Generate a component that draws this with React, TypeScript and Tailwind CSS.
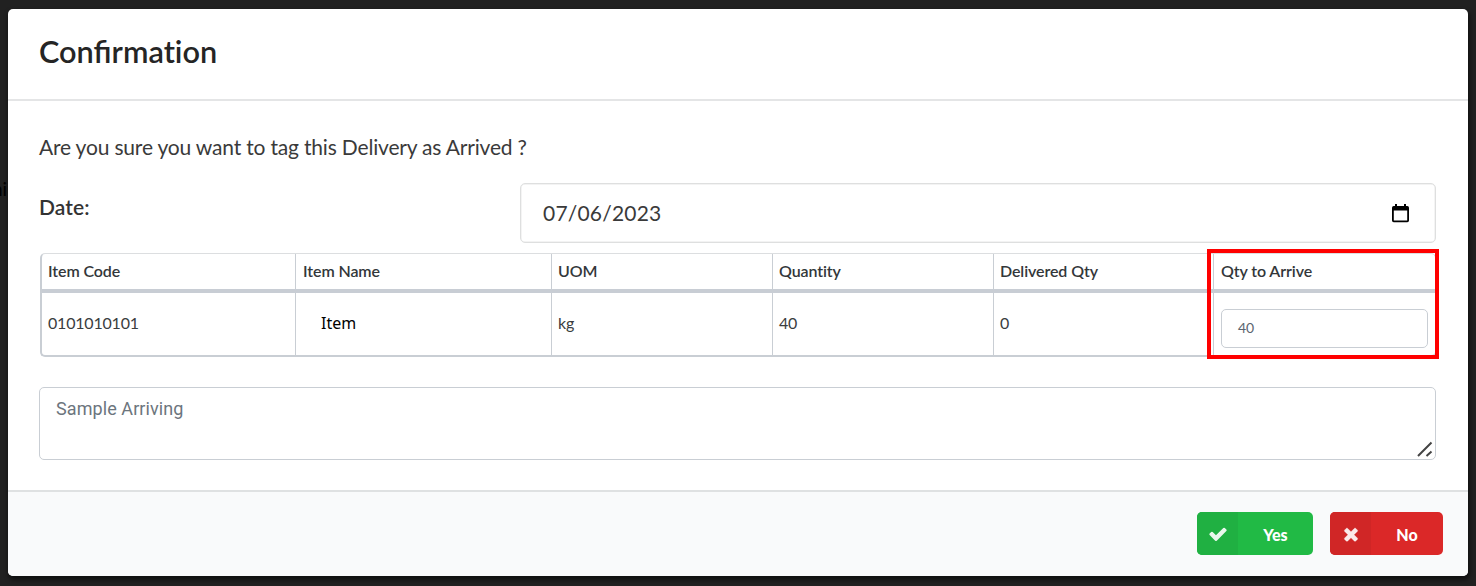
import React from "react";

const columns = [
  { title: "Item Code", value: "0101010101", width: "w-[253px] pl-[6px]" },
  { title: "Item Name", value: "Item", width: "w-[256px] pl-[7px] border-l border-[#c9ced4]" },
  { title: "UOM", value: "kg", width: "w-[221px] pl-[6px] border-l border-[#c9ced4]" },
  { title: "Quantity", value: "40", width: "w-[221px] pl-[6px] border-l border-[#c9ced4]" },
  { title: "Delivered Qty", value: "0", width: "w-[220px] pl-[6px] border-l border-[#c9ced4]" },
  { title: "Qty to Arrive", value: "40", width: "flex-1 pl-[7px] border-l border-[#c9ced4]" },
];

function CalendarIcon() {
  return (
    <svg width="17" height="19" viewBox="0 0 17 19" aria-hidden="true">
      <path
        fill="#000"
        fillRule="evenodd"
        d="M3 0h2v2h7V0h2v2h1.300A1.700 1.700 0 0 1 17 3.700v12.800a1.700 1.700 0 0 1-1.700 1.700H1.700A1.700 1.700 0 0 1 0 16.500V3.700A1.700 1.700 0 0 1 1.700 2H3zM1.800 6.500v9.900h13.400V6.500z"
      />
    </svg>
  );
}

function CheckIcon() {
  return (
    <svg width="20" height="20" viewBox="0 0 1792 1792" fill="#fff" fillOpacity="0.9" aria-hidden="true">
      <path d="M1671 566q0 40-28 68l-724 724-136 136q-28 28-68 28t-68-28l-136-136-362-362q-28-28-28-68t28-68l136-136q28-28 68-28t68 28l294 295 656-657q28-28 68-28t68 28l136 136q28 28 28 68z" />
    </svg>
  );
}

function CrossIcon() {
  return (
    <svg width="20" height="20" viewBox="0 0 1792 1792" fill="#fff" fillOpacity="0.9" stroke="#fff" strokeOpacity="0.5" strokeWidth="50" aria-hidden="true">
      <path d="M1490 1322q0 40-28 68l-136 136q-28 28-68 28t-68-28l-294-294-294 294q-28 28-68 28t-68-28l-136-136q-28-28-28-68t28-68l294-294-294-294q-28-28-28-68t28-68l136-136q28-28 68-28t68 28l294 294 294-294q28-28 68-28t68 28l136 136q28 28 28 68t-28 68l-294 294 294 294q28 28 28 68z" />
    </svg>
  );
}

export default function App() {
  return (
    <div className="relative flex h-[586px] w-[1476px] overflow-hidden bg-[#212121] px-2 pt-[9px] pb-[10px] font-['Lato',sans-serif] text-[#212529]">
      <span className="absolute top-[175px] left-[-8px] text-[19px] text-black">ni</span>
      <div className="relative flex w-full flex-col overflow-hidden rounded-[5px] bg-white shadow-[1px_3px_4px_1px_rgba(0,0,0,0.5)]">
        <header className="flex h-[92px] items-center border-b-2 border-[#e4e5e6] pl-[31px]">
          <h1 className="mt-[-4px] text-[30.700px] leading-none font-semibold text-[#252525]">
            Confirma<span className="tracking-[-0.2px]">t</span>ion
          </h1>
        </header>

        <main className="flex h-[389px] flex-col pr-8 pl-[31px]">
          <p className="mt-[33px] text-[21px] leading-[26px] tracking-[-0.18px] text-[#3a3a3a]">
            Are you sure you want to tag this Delivery as Arrived ?
          </p>
          <div className="mt-[23px] flex h-[60px] justify-between">
            <label className="pt-[11px] text-[21px] leading-[26px] font-semibold tracking-[0.1px] text-[#333]">Date:</label>
            <div className="flex w-[916px] items-center justify-between rounded-[5px] border border-[#dedfdf] pr-[26px] pl-[22px] shadow-[inset_0_0_0_0.500px_#e8e8e8]">
              <span className="text-[21px] tracking-[0.2px] text-[#3a3a3a]">07/06/2023</span>
              <CalendarIcon />
            </div>
          </div>

          <section className="mt-[10px] ml-px h-[104px] overflow-hidden rounded-[5px] border-t border-r border-b-2 border-l-2 border-t-[#dcdee0] border-r-[#ced4da] border-b-[#c9ced4] border-l-[#c9ced4] text-[16px]">
            <div className="flex h-[39px] border-b-4 border-[#c8cdd4]">
              {columns.map((c) => (
                <div
                  key={c.title}
                  className={`${c.width} shrink-0 pt-[5px] leading-6 font-semibold tracking-[-0.1px] text-[#33373a]`}
                >
                  {c.title}
                </div>
              ))}
            </div>
            <div className="flex h-[62px]">
              {columns.map((c, i) => (
                <div key={c.title} className={`${c.width} shrink-0 pt-[18px] leading-6 tracking-[-0.2px] text-[#3a3d40]`}>
                  {i === 1 ? (
                    <span className="pl-[18px] font-['Noto_Sans',sans-serif] text-[16px] tracking-normal text-black">
                      {c.value}
                    </span>
                  ) : i === 5 ? (
                    <div className="mt-[-2px] mr-[7px] flex h-[39px] items-center rounded-[5px] border border-[#c9ced4] pb-px pl-[16px] text-[14px] text-[#5b6570]">
                      {c.value}
                    </div>
                  ) : (
                    c.value
                  )}
                </div>
              ))}
            </div>
          </section>

          <div className="relative mt-[30px] h-[73px] rounded-[5px] border border-[#c9ced4] px-4 pt-[9px] font-['Roboto',sans-serif] text-[18px] leading-6 tracking-[0.08px] text-[#6c757d]">
            Sample Arriving
            <svg className="absolute right-[2px] bottom-[2px]" width="16" height="16" viewBox="0 0 16 16" aria-hidden="true">
              <path d="M1 15 14.500 1.500M9.500 15l5-4.500" fill="none" stroke="#444" strokeWidth="2" />
            </svg>
          </div>
        </main>

        <footer className="flex flex-1 items-start justify-end gap-[17px] border-t-2 border-[#dfe1e2] bg-[#f9fafb] pt-[20px] pr-[25px]">
          <button className="flex h-[43px] w-[116px] overflow-hidden rounded-[5px] bg-[#21ba45] text-[16px] font-black text-white">
            <span className="flex h-full w-[41px] items-center justify-center bg-[#20b042]">
              <CheckIcon />
            </span>
            <span className="flex h-full flex-1 items-center justify-center pt-[2px]">Yes</span>
          </button>
          <button className="flex h-[43px] w-[113px] overflow-hidden rounded-[5px] bg-[#db2828] text-[16px] font-black text-white">
            <span className="flex h-full w-[41px] items-center justify-center bg-[#d02626]">
              <CrossIcon />
            </span>
            <span className="flex h-full flex-1 items-center justify-center pt-[2px]">No</span>
          </button>
        </footer>
      </div>
      <div className="absolute top-[249px] left-[1207px] h-[110px] w-[232px] border-4 border-[#f00]" />
    </div>
  );
}
